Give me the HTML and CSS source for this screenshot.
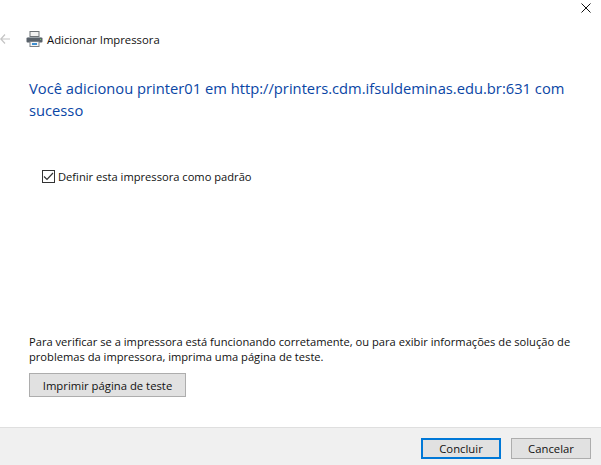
FILE: index.html
```html
<!DOCTYPE html>
<html lang="pt-BR">
<head>
<meta charset="utf-8">
<title>Adicionar Impressora</title>
<link rel="stylesheet" href="styles.css">
</head>
<body>
<div class="window">
  <div class="titlebar">
    <svg class="close" width="10" height="10" viewBox="0 0 10 10"><path d="M0.5 0.5L9.5 9.5M9.5 0.5L0.5 9.5" stroke="#111" stroke-width="1" fill="none"/></svg>
  </div>
  <div class="nav">
    <svg class="back" width="10" height="10" viewBox="0 0 10 10"><path d="M5 0.5L0.8 5L5 9.5M0.8 5H10" stroke="#c4c4c4" stroke-width="1.2" fill="none"/></svg>
    <svg class="printer" width="17" height="16" viewBox="0 0 17 16">
      <rect x="4" y="0.5" width="9" height="5" fill="#f2f2f2" stroke="#6f7479"/>
      <rect x="0.5" y="6.5" width="16" height="5" rx="1" fill="#59616a"/>
      <rect x="2" y="6" width="13" height="1" fill="#9aa2a8"/>
      <rect x="4" y="10.5" width="9" height="5" fill="#f4f4f4" stroke="#7b8085"/>
      <rect x="6" y="12" width="5" height="2" fill="#3f8fd0"/>
      <rect x="14" y="8" width="1" height="1" fill="#6fce5b"/>
    </svg>
    <span class="nav-title">Adicionar Impressora</span>
  </div>
  <main class="content">
    <h1 class="heading">Você adicionou printer01 em http://printers.cdm.ifsuldeminas.edu.br:631 com sucesso</h1>
    <label class="check-row">
      <span class="checkbox"><svg width="11" height="9" viewBox="0 0 11 9"><path d="M1 4.5L4 7.5L10 1" stroke="#333" stroke-width="1.2" fill="none"/></svg></span>
      <span>Definir esta impressora como padrão</span>
    </label>
    <div class="spacer"></div>
    <p class="hint">Para verificar se a impressora está funcionando corretamente, ou para exibir informações de solução de problemas da impressora, imprima uma página de teste.</p>
    <button class="btn btn-test" type="button">Imprimir página de teste</button>
  </main>
  <footer class="footer">
    <button class="btn btn-foot btn-primary" type="button">Concluir</button>
    <button class="btn btn-foot" type="button">Cancelar</button>
  </footer>
</div>
</body>
</html>
```
FILE: styles.css
```css
* { box-sizing: border-box; }
html, body { margin: 0; height: 100%; }
body { background: #fff; font-family: "Open Sans", "Noto Sans", sans-serif; font-size: 11.15px; color: #111; overflow: hidden; }
.window { display: flex; flex-direction: column; width: 601px; height: 465px; }
.titlebar { display: flex; justify-content: flex-end; height: 29px; padding: 3px 10px 0 0; flex: none; }
.close { display: block; }
.nav { display: flex; align-items: center; height: 20px; flex: none; }
.printer { margin-left: 16px; }
.nav-title { margin-left: 4px; font-size: 11.3px; }
.content { flex: 1; display: flex; flex-direction: column; padding: 28px 25px 30px 29px; min-height: 0; }
.heading { margin: 0; font-size: 14.72px; line-height: 22px; font-weight: 400; color: #0a46a5; }
.check-row { display: flex; align-items: center; gap: 3px; margin-top: 46px; height: 18px; margin-left: 13px; }
.checkbox { width: 13px; height: 13px; border: 1px solid #333; display: flex; align-items: center; justify-content: center; background: #fff; }
.spacer { flex: 1; }
.hint { margin: 0 0 9px; line-height: 15px; }
.btn { font: inherit; font-size: 11.3px; color: #111; background: #e1e1e1; border: 1px solid #adadad; padding: 0; height: 24px; }
.btn-test { width: 157px; }
.footer { flex: none; height: 38px; display: flex; justify-content: flex-end; gap: 10px; padding: 10px 10px 0 0; background: #f0f0f0; border-top: 1px solid #dfdfdf; }
.btn-foot { width: 80px; height: 21px; }
.btn-primary { border: 2px solid #0078d7; }
```
